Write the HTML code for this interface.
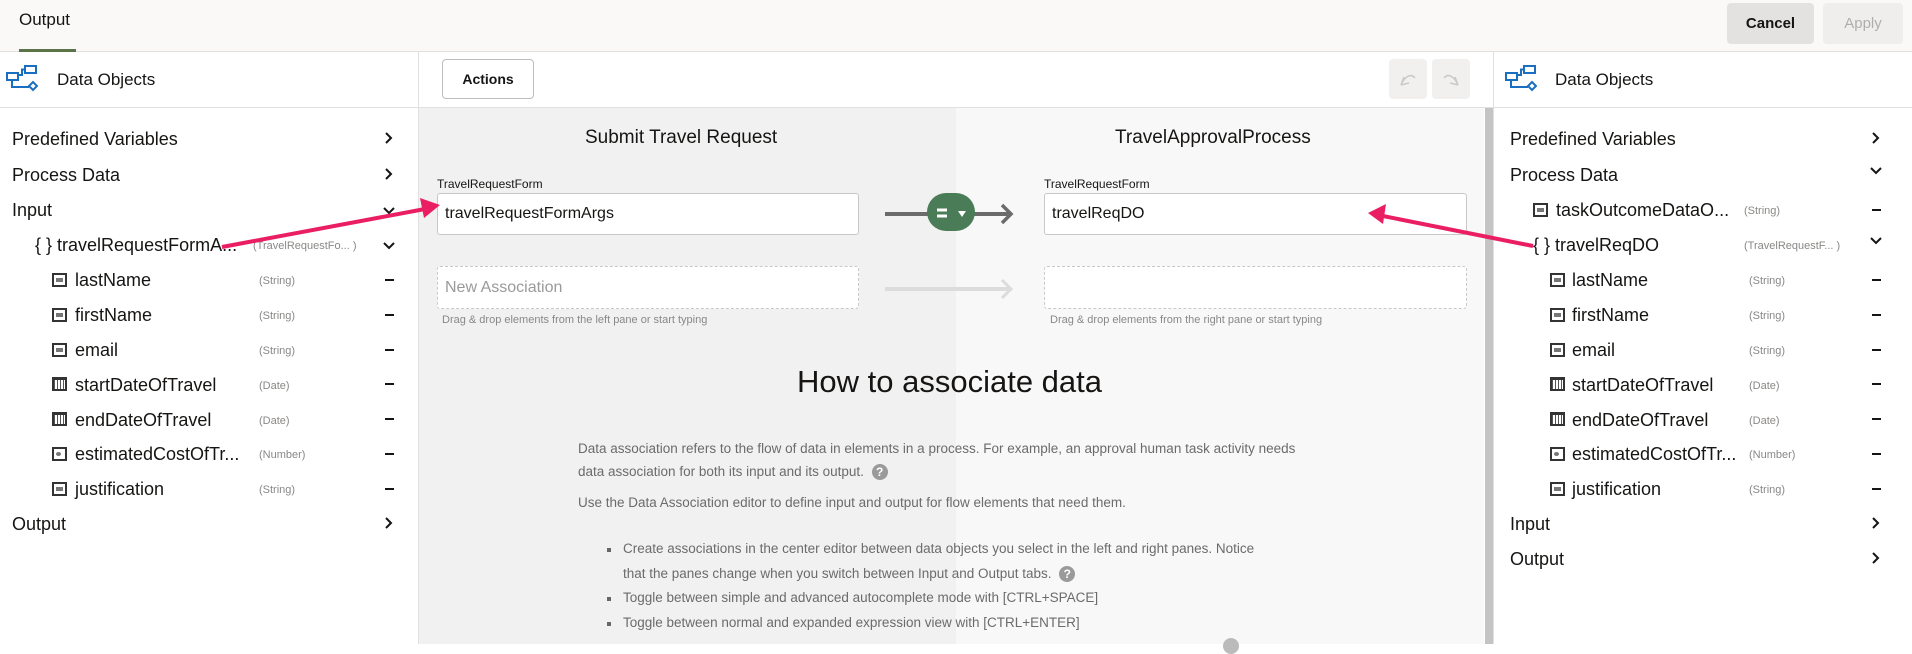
<!DOCTYPE html>
<html><head><meta charset="utf-8">
<style>
*{box-sizing:border-box;margin:0;padding:0}
body{width:1912px;height:644px;overflow:hidden;background:#fff;font-family:"Liberation Sans",sans-serif;color:#161513;position:relative}
.a{position:absolute;white-space:nowrap}
.row{position:absolute;font-size:18px;line-height:22px;color:#161513}
.typ{position:absolute;font-size:11px;color:#8a8886}
.dash{position:absolute;width:9px;height:2px;background:#161513}
.ico{position:absolute;width:15px;height:14px;border:2px solid #333;background:#fff}
.ico i{position:absolute;left:2px;top:3px;width:7px;height:4px;background:#777}
.cal{position:absolute;width:15px;height:14px;border:2px solid #333;border-top-width:3px;background:repeating-linear-gradient(90deg,#555 0 1px,#fff 1px 3px)}
.hlp{display:inline-block;width:16px;height:16px;border-radius:50%;background:#9a9a9a;color:#fff;font-size:12px;font-weight:bold;text-align:center;line-height:16px;vertical-align:top;margin-left:4px}
.p{position:absolute;font-size:13.5px;color:#6b6b6b;white-space:nowrap}
</style></head><body>
<!-- header -->
<div class="a" style="left:0;top:0;width:1912px;height:52px;background:#faf9f8;border-bottom:1px solid #e2e0de"></div>
<div class="a" style="left:19px;top:10px;font-size:17px;color:#161513">Output</div>
<div class="a" style="left:19px;top:49px;width:57px;height:3px;background:#5b7349"></div>
<div class="a" style="left:1727px;top:3px;width:87px;height:41px;background:#e4e2e0;border-radius:4px;font-size:15px;font-weight:bold;color:#161513;text-align:center;line-height:41px">Cancel</div>
<div class="a" style="left:1823px;top:3px;width:80px;height:41px;background:#efeeec;border-radius:4px;font-size:15px;color:#b0aeac;text-align:center;line-height:41px">Apply</div>

<!-- left panel -->
<div class="a" style="left:418px;top:52px;width:1px;height:592px;background:#e0e0e0"></div>
<div class="a" style="left:0;top:107px;width:418px;height:1px;background:#e0e0e0"></div>
<svg class="a" style="left:6px;top:65px" width="32" height="28" viewBox="0 0 32 28" fill="none" stroke="#1b6fc0" stroke-width="2"><rect x="19" y="1" width="11" height="7"/><rect x="1" y="8" width="11" height="7"/><path d="M12 10h4V4.5h3M6 15v7h17"/><path d="M27 17l4 4-4 4-4-4z"/></svg>
<div class="a" style="left:57px;top:70px;font-size:17px">Data Objects</div>

<div class="row" style="left:12px;top:128px">Predefined Variables</div>
<div class="row" style="left:12px;top:164px">Process Data</div>
<div class="row" style="left:12px;top:199px">Input</div>
<div class="row" style="left:35px;top:234px">{ } travelRequestFormA...</div>
<div class="typ" style="left:253px;top:240px">(TravelRequestFo... )</div>

<div class="ico" style="left:52px;top:273px"><i></i></div><div class="row" style="left:75px;top:269px">lastName</div><div class="typ" style="left:259px;top:275px">(String)</div><div class="dash" style="left:385px;top:279px"></div>
<div class="ico" style="left:52px;top:308px"><i></i></div><div class="row" style="left:75px;top:304px">firstName</div><div class="typ" style="left:259px;top:310px">(String)</div><div class="dash" style="left:385px;top:314px"></div>
<div class="ico" style="left:52px;top:343px"><i></i></div><div class="row" style="left:75px;top:339px">email</div><div class="typ" style="left:259px;top:345px">(String)</div><div class="dash" style="left:385px;top:349px"></div>
<div class="cal" style="left:52px;top:377px"></div><div class="row" style="left:75px;top:374px">startDateOfTravel</div><div class="typ" style="left:259px;top:380px">(Date)</div><div class="dash" style="left:385px;top:383px"></div>
<div class="cal" style="left:52px;top:412px"></div><div class="row" style="left:75px;top:409px">endDateOfTravel</div><div class="typ" style="left:259px;top:415px">(Date)</div><div class="dash" style="left:385px;top:418px"></div>
<div class="ico" style="left:52px;top:447px"><i style="top:3px;width:5px;height:4px;border-radius:50%"></i></div><div class="row" style="left:75px;top:443px">estimatedCostOfTr...</div><div class="typ" style="left:259px;top:449px">(Number)</div><div class="dash" style="left:385px;top:453px"></div>
<div class="ico" style="left:52px;top:482px"><i></i></div><div class="row" style="left:75px;top:478px">justification</div><div class="typ" style="left:259px;top:484px">(String)</div><div class="dash" style="left:385px;top:488px"></div>
<div class="row" style="left:12px;top:513px">Output</div>

<svg class="a" style="left:380px;top:130px" width="20" height="420" fill="none" stroke="#161513" stroke-width="2">
<path d="M6 3l5 5-5 5"/><path d="M6 39l5 5-5 5"/><path d="M4 78l5 5 5-5"/><path d="M4 113l5 5 5-5"/><path d="M6 388l5 5-5 5"/></svg>

<!-- center -->
<div class="a" style="left:419px;top:108px;width:537px;height:536px;background:#f1f1f1"></div>
<div class="a" style="left:956px;top:108px;width:528px;height:536px;background:#f8f8f8"></div>
<div class="a" style="left:1485px;top:108px;width:9px;height:536px;background:#c4c4c4"></div>
<div class="a" style="left:1493px;top:52px;width:1px;height:592px;background:#e0e0e0"></div>
<div class="a" style="left:419px;top:107px;width:1075px;height:1px;background:#e0e0e0"></div>
<div class="a" style="left:442px;top:59px;width:92px;height:40px;border:1px solid #bdbdbd;border-radius:4px;background:#fff;font-size:14px;font-weight:bold;text-align:center;line-height:38px">Actions</div>
<div class="a" style="left:1389px;top:59px;width:38px;height:40px;background:#f1f0ef;border-radius:4px"></div>
<div class="a" style="left:1432px;top:59px;width:38px;height:40px;background:#f1f0ef;border-radius:4px"></div>
<svg class="a" style="left:1398px;top:69px" width="64" height="20" fill="none" stroke="#c9c9c9" stroke-width="1.5"><path d="M3 16l3-8M3 16l8-2M3 16c4-9 10-12 14-7"/><path d="M60 16l-3-8M60 16l-8-2M60 16c-4-9-10-12-14-7"/></svg>

<div class="a" style="left:585px;top:127px;font-size:19px;color:#161513">Submit Travel Request</div>
<div class="a" style="left:1115px;top:127px;font-size:19px;color:#161513">TravelApprovalProcess</div>
<div class="a" style="left:437px;top:177px;font-size:12px">TravelRequestForm</div>
<div class="a" style="left:1044px;top:177px;font-size:12px">TravelRequestForm</div>
<div class="a" style="left:437px;top:193px;width:422px;height:42px;background:#fff;border:1px solid #c8c8c8;border-radius:3px;font-size:16px;line-height:40px;padding-left:7px">travelRequestFormArgs</div>
<div class="a" style="left:1044px;top:193px;width:423px;height:42px;background:#fff;border:1px solid #c8c8c8;border-radius:3px;font-size:16px;line-height:40px;padding-left:7px">travelReqDO</div>
<svg class="a" style="left:880px;top:190px" width="140" height="50"><path d="M5 24h125" stroke="#6b6b6b" stroke-width="4"/><path d="M122 15l9 9-9 9" fill="none" stroke="#6b6b6b" stroke-width="3.5"/><rect x="47" y="3" width="48" height="38" rx="19" fill="#4a7d57"/><path d="M57 20h10M57 26h10" stroke="#fff" stroke-width="3"/><path d="M78 21h8l-4 6z" fill="#fff"/></svg>
<div class="a" style="left:437px;top:266px;width:422px;height:43px;border:1px dashed #c8c8c8;border-radius:3px;background:#fff;font-size:16px;line-height:41px;padding-left:7px;color:#9a9a9a">New Association</div>
<div class="a" style="left:1044px;top:266px;width:423px;height:43px;border:1px dashed #c8c8c8;border-radius:3px;background:#fff"></div>
<svg class="a" style="left:880px;top:275px" width="140" height="30"><path d="M5 14h125" stroke="#dcdcdc" stroke-width="4"/><path d="M122 5l9 9-9 9" fill="none" stroke="#dcdcdc" stroke-width="3"/></svg>
<div class="a" style="left:442px;top:314px;font-size:11px;color:#8a8886">Drag &amp; drop elements from the left pane or start typing</div>
<div class="a" style="left:1050px;top:314px;font-size:11px;color:#8a8886">Drag &amp; drop elements from the right pane or start typing</div>

<div class="a" style="left:797px;top:364px;font-size:31px;color:#161513">How to associate data</div>
<div class="p" style="left:578px;top:441px">Data association refers to the flow of data in elements in a process. For example, an approval human task activity needs</div>
<div class="p" style="left:578px;top:464px">data association for both its input and its output. <span class="hlp">?</span></div>
<div class="p" style="left:578px;top:495px">Use the Data Association editor to define input and output for flow elements that need them.</div>
<div class="a" style="left:607px;top:548px;width:4px;height:4px;background:#666"></div>
<div class="p" style="left:623px;top:541px">Create associations in the center editor between data objects you select in the left and right panes. Notice</div>
<div class="p" style="left:623px;top:566px">that the panes change when you switch between Input and Output tabs. <span class="hlp">?</span></div>
<div class="a" style="left:607px;top:597px;width:4px;height:4px;background:#666"></div>
<div class="p" style="left:623px;top:590px">Toggle between simple and advanced autocomplete mode with [CTRL+SPACE]</div>
<div class="a" style="left:607px;top:622px;width:4px;height:4px;background:#666"></div>
<div class="p" style="left:623px;top:615px">Toggle between normal and expanded expression view with [CTRL+ENTER]</div>
<div class="a" style="left:1223px;top:638px;width:16px;height:16px;border-radius:50%;background:#bbb"></div>

<!-- right panel -->
<div class="a" style="left:1494px;top:107px;width:418px;height:1px;background:#e0e0e0"></div>
<svg class="a" style="left:1505px;top:65px" width="32" height="28" viewBox="0 0 32 28" fill="none" stroke="#1b6fc0" stroke-width="2"><rect x="19" y="1" width="11" height="7"/><rect x="1" y="8" width="11" height="7"/><path d="M12 10h4V4.5h3M6 15v7h17"/><path d="M27 17l4 4-4 4-4-4z"/></svg>
<div class="a" style="left:1555px;top:70px;font-size:17px">Data Objects</div>
<div class="row" style="left:1510px;top:128px">Predefined Variables</div>
<div class="row" style="left:1510px;top:164px">Process Data</div>
<div class="ico" style="left:1533px;top:203px"><i></i></div><div class="row" style="left:1556px;top:199px">taskOutcomeDataO...</div><div class="typ" style="left:1744px;top:205px">(String)</div><div class="dash" style="left:1872px;top:209px"></div>
<div class="row" style="left:1533px;top:234px">{ } travelReqDO</div><div class="typ" style="left:1744px;top:240px">(TravelRequestF... )</div>
<div class="ico" style="left:1550px;top:273px"><i></i></div><div class="row" style="left:1572px;top:269px">lastName</div><div class="typ" style="left:1749px;top:275px">(String)</div><div class="dash" style="left:1872px;top:279px"></div>
<div class="ico" style="left:1550px;top:308px"><i></i></div><div class="row" style="left:1572px;top:304px">firstName</div><div class="typ" style="left:1749px;top:310px">(String)</div><div class="dash" style="left:1872px;top:314px"></div>
<div class="ico" style="left:1550px;top:343px"><i></i></div><div class="row" style="left:1572px;top:339px">email</div><div class="typ" style="left:1749px;top:345px">(String)</div><div class="dash" style="left:1872px;top:349px"></div>
<div class="cal" style="left:1550px;top:377px"></div><div class="row" style="left:1572px;top:374px">startDateOfTravel</div><div class="typ" style="left:1749px;top:380px">(Date)</div><div class="dash" style="left:1872px;top:383px"></div>
<div class="cal" style="left:1550px;top:412px"></div><div class="row" style="left:1572px;top:409px">endDateOfTravel</div><div class="typ" style="left:1749px;top:415px">(Date)</div><div class="dash" style="left:1872px;top:418px"></div>
<div class="ico" style="left:1550px;top:447px"><i style="width:5px;border-radius:50%"></i></div><div class="row" style="left:1572px;top:443px">estimatedCostOfTr...</div><div class="typ" style="left:1749px;top:449px">(Number)</div><div class="dash" style="left:1872px;top:453px"></div>
<div class="ico" style="left:1550px;top:482px"><i></i></div><div class="row" style="left:1572px;top:478px">justification</div><div class="typ" style="left:1749px;top:484px">(String)</div><div class="dash" style="left:1872px;top:488px"></div>
<div class="row" style="left:1510px;top:513px">Input</div>
<div class="row" style="left:1510px;top:548px">Output</div>
<svg class="a" style="left:1867px;top:130px" width="20" height="460" fill="none" stroke="#161513" stroke-width="2">
<path d="M6 3l5 5-5 5"/><path d="M4 38l5 5 5-5"/><path d="M4 108l5 5 5-5"/><path d="M6 388l5 5-5 5"/><path d="M6 423l5 5-5 5"/></svg>

<!-- pink arrows -->
<svg class="a" style="left:0;top:0" width="1912" height="644">
<path d="M222 247L425 209" stroke="#ea1f63" stroke-width="4"/><path d="M440 205l-20-7 4 20z" fill="#ea1f63"/>
<path d="M1533 246L1383 216" stroke="#ea1f63" stroke-width="4"/><path d="M1368 213l18-9-3 20z" fill="#ea1f63"/>
</svg>
</body></html>
